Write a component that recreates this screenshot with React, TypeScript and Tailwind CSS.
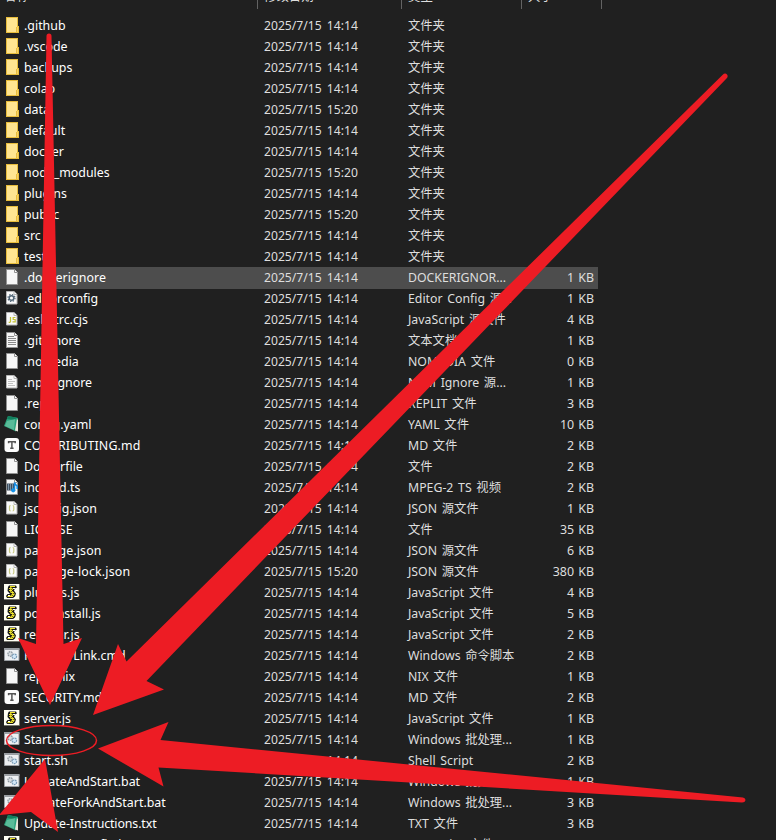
import React from "react";

type Kind =
  | "folder" | "blank" | "gear" | "cjs" | "lines" | "npm" | "green" | "typora"
  | "ts" | "json" | "js" | "script";

type Entry = [kind: Kind, name: string, type: string, size?: string, time?: string];

const DIR = "文件夹";

const entries: Entry[] = [
  ["folder", ".github", DIR],
  ["folder", ".vscode", DIR],
  ["folder", "backups", DIR],
  ["folder", "colab", DIR],
  ["folder", "data", DIR, "", "15:20"],
  ["folder", "default", DIR],
  ["folder", "docker", DIR],
  ["folder", "node_modules", DIR, "", "15:20"],
  ["folder", "plugins", DIR],
  ["folder", "public", DIR, "", "15:20"],
  ["folder", "src", DIR],
  ["folder", "tests", DIR],
  ["blank", ".dockerignore", "DOCKERIGNOR...", "1 KB"],
  ["gear", ".editorconfig", "Editor Config 源...", "1 KB"],
  ["cjs", ".eslintrc.cjs", "JavaScript 源文件", "4 KB"],
  ["lines", ".gitignore", "文本文档", "1 KB"],
  ["blank", ".nomedia", "NOMEDIA 文件", "0 KB"],
  ["npm", ".npmignore", "NPM Ignore 源...", "1 KB"],
  ["blank", ".replit", "REPLIT 文件", "3 KB"],
  ["green", "config.yaml", "YAML 文件", "10 KB"],
  ["typora", "CONTRIBUTING.md", "MD 文件", "2 KB"],
  ["blank", "Dockerfile", "文件", "2 KB"],
  ["ts", "index.d.ts", "MPEG-2 TS 视频", "2 KB"],
  ["json", "jsconfig.json", "JSON 源文件", "1 KB"],
  ["blank", "LICENSE", "文件", "35 KB"],
  ["json", "package.json", "JSON 源文件", "6 KB"],
  ["json", "package-lock.json", "JSON 源文件", "380 KB", "15:20"],
  ["js", "plugins.js", "JavaScript 文件", "4 KB"],
  ["js", "post-install.js", "JavaScript 文件", "5 KB"],
  ["js", "recover.js", "JavaScript 文件", "2 KB"],
  ["script", "Remote-Link.cmd", "Windows 命令脚本", "2 KB"],
  ["blank", "replit.nix", "NIX 文件", "1 KB"],
  ["typora", "SECURITY.md", "MD 文件", "2 KB"],
  ["js", "server.js", "JavaScript 文件", "1 KB"],
  ["script", "Start.bat", "Windows 批处理...", "1 KB"],
  ["script", "start.sh", "Shell Script", "2 KB"],
  ["script", "UpdateAndStart.bat", "Windows 批处理...", "1 KB"],
  ["script", "UpdateForkAndStart.bat", "Windows 批处理...", "3 KB"],
  ["green", "Update-Instructions.txt", "TXT 文件", "3 KB"],
  ["js", "webpack.config.js", "JavaScript 文件", "2 KB"],
];

const tracking: Record<string, string> = {
  ".dockerignore": "tracking-[0.08px]",
  "CONTRIBUTING.md": "tracking-[0.12px]",
  "package.json": "tracking-[0.1px]",
  "package-lock.json": "tracking-[0.16px]",
  "recover.js": "tracking-[0.2px]",
  "Start.bat": "tracking-[-0.1px]",
  "Update-Instructions.txt": "tracking-[-0.12px]",
};

function Page({ small = false, children }: { small?: boolean; children?: React.ReactNode }) {
  return small ? (
    <>
      <path d="M2.5 1.500h7.500l3 3v9.500h-10.500z" fill="#fafafa" stroke="#b5b5b5" />
      <path d="M10 1.500v3h3" fill="#fff" stroke="#b5b5b5" />
      {children}
    </>
  ) : (
    <>
      <path d="M2.5.5h8l3 3v12h-11z" fill="#f7f7f7" stroke="#929292" />
      <path d="M10.500.5v3h3" fill="#fff" stroke="#929292" />
      {children}
    </>
  );
}

function Glyph({ kind }: { kind: Kind }) {
  switch (kind) {
    case "folder":
      return (
        <>
          <path d="M2 0h12v9h1v7H2z" fill="#e8bd3c" />
          <path d="M3 1h10v14H3z" fill="#ffe591" />
          <path d="M12 10h2v5h-2z" fill="#f6d268" />
          <path d="M12.500 10v5" stroke="#e8bd3c" />
        </>
      );
    case "blank":
      return <Page />;
    case "gear":
      return (
        <Page small>
          <circle cx="7.5" cy="8" r="2.3" fill="none" stroke="#536878" strokeWidth="1.5" />
          <circle cx="7.5" cy="8" r="3.5" fill="none" stroke="#536878" strokeWidth="1.2" strokeDasharray="1.4 1.35" />
        </Page>
      );
    case "cjs":
      return (
        <Page small>
          <path d="M6.500 6v4.500q0 1.200-1.800.6M11.500 6.500H9.200v2h2v2.400H8.500" fill="none" stroke="#c3c235" strokeWidth="1.2" />
        </Page>
      );
    case "lines":
      return (
        <Page>
          <path d="M4 4.5h6M4 6.5h8M4 8.5h8M4 10.5h8M4 12.5h8" stroke="#8a8a8a" />
        </Page>
      );
    case "npm":
      return (
        <Page small>
          <path d="M4 5.5h4M4 7.5h7M4 9.5h5M4 11.5h7" stroke="#c2c2c2" />
        </Page>
      );
    case "green":
      return (
        <>
          <path d="M4 0 14 2 12 15.5 0 10z" fill="#2aa37c" />
          <path d="M4 0 13 1.700 10 4 3 3z" fill="#127f5e" />
          <path d="M3 5 11 3l-1 11-9-4z" fill="#7bcbac" opacity=".6" />
          <path d="M13 3l1 1v11.500l-3-1z" fill="#e9e4d8" />
        </>
      );
    case "typora":
      return (
        <>
          <rect x=".5" y="1" width="14.5" height="14" rx="3" fill="#fcfcfc" />
          <path d="M4.600 6.200V4.700h6.600v1.500M7.900 5v6.300M6.200 11.300h3.400" fill="none" stroke="#555" strokeWidth="1.500" />
        </>
      );
    case "ts":
      return (
        <Page>
          <path d="M3 4.500h7v7H3z" fill="#3f4d5c" />
          <path d="M4 6h5M4 8h5M4 10h5" stroke="#b8d8ee" strokeDasharray="1 1" />
          <path d="M10.500 11.500V3.500q.6 2.500 2.700 3.500v3" fill="none" stroke="#128be3" strokeWidth="1.500" />
          <circle cx="9.200" cy="11.300" r="2.100" fill="#1593e8" />
        </Page>
      );
    case "json":
      return (
        <Page small>
          <path d="M6.600 5.500q-1.100 0-1.100 1.400v2.500q0 1.400 1.100 1.400M8.700 5.500q1.100 0 1.100 1.400v2.500q0 1.400-1.100 1.400" fill="none" stroke="#c9ca87" strokeWidth="1.200" />
        </Page>
      );
    case "js":
      return (
        <>
          <path d="M0 0h15v15H0z" fill="#fffff4" />
          <path d="M0 15.500h15.500V0" fill="none" stroke="#77776c" />
          <path d="M5 1.500h7l1 2-2 1-1 2 2 3-1 3-2 1.500H3L2 12l1.500-2H6L3.500 7l.5-4z" fill="#1b1b16" />
          <path d="M6 2.500h5M5 4.500h3.500M5 6.500h3M6.500 8.500h3.500M7.500 10.500h3M3.500 12.500h5.500" stroke="#f1e72f" />
          <path d="M6 3.500h2M6 5.500h3M6 7.500h3M8 9.500h2.500M5 11.500h5" stroke="#c9bf22" strokeDasharray="1.500 .5" />
          <path d="M9 4.500h2M4 11.500h2" stroke="#fff" />
        </>
      );
    case "script":
      return (
        <>
          <path d="M.5 1.500h14.500v12H.5z" fill="#eef0f2" stroke="#9b9fa3" />
          <path d="M0 2h15.500" stroke="#9b9fa3" strokeWidth="2" />
          <circle cx="6.2" cy="7" r="2.3" fill="#d8dde1" stroke="#8d979f" strokeWidth="1.2" strokeDasharray="1.5 .6" />
          <circle cx="10.3" cy="9.300" r="2.3" fill="#d2e8f8" stroke="#7699b5" strokeWidth="1.2" strokeDasharray="1.5 .6" />
        </>
      );
  }
}

const columns = "grid grid-cols-[24px_240px_144px_113px_73px] items-center";

function Row({ entry, selected }: { entry: Entry; selected: boolean }) {
  const [kind, name, type, size, time = "14:14"] = entry;
  return (
    <div className={`${columns} h-[21px] w-[598px] shrink-0 whitespace-pre ${selected ? "bg-[#4d4d4d] shadow-[0_1px_0_#4d4d4d]" : ""}`}>
      <svg className="mb-px ml-1 size-4" viewBox="0 0 16 16">
        <Glyph kind={kind} />
      </svg>
      <span className={`text-white ${tracking[name] ?? ""}`}>{name}</span>
      <span className="text-[12.15px] [word-spacing:2px]">{`2025/7/15 ${time}`}</span>
      <span className="text-[12.3px] [word-spacing:1.5px]">{type}</span>
      <span className="text-right [word-spacing:1px]">{size}</span>
    </div>
  );
}

function Heading({ label, className }: { label: string; className: string }) {
  return (
    <div className={`flex h-[9px] items-end border-r border-[#636363] ${className}`}>
      <span className="mb-[4px] leading-4">{label}</span>
    </div>
  );
}

export default function App() {
  return (
    <main className="relative flex h-[840px] w-[776px] flex-col overflow-hidden bg-[#202020] font-['Noto_Sans','Noto_Sans_CJK_SC',sans-serif] text-[12.4px] leading-[21px] text-[#dedede]">
      <header className="flex h-[15px] shrink-0">
        <Heading label="名称" className="w-[258px] pl-1" />
        <Heading label="修改日期" className="w-[144px] pl-[6px]" />
        <Heading label="类型" className="w-[120px] pl-[6px]" />
        <Heading label="大小" className="w-[80px] pl-[6px]" />
      </header>
      {entries.map((entry, i) => (
        <Row key={entry[1]} entry={entry} selected={i === 12} />
      ))}
      <svg className="absolute inset-0" width="776" height="840" viewBox="0 0 776 840">
        <g fill="#ed1c24">
          <path d="M46.500 36Q46.500 33.500 49 33.500Q51.500 33.500 51.500 36L63.500 644 82 638 50 705 18 638 36 644Z" />
          <path d="M722.500 75Q725 72.500 727 74.500Q728.500 76.500 726.500 78.500L146.500 681 164 689.500 93 715 118 644 126.500 661.500Z" />
          <path d="M743 797.500Q745.500 798 745.500 800Q745 802.500 742 802.500L158.500 767.500 163.500 786.500 98 748.500 168.500 722 160.500 740Z" />
          <path d="M45 759 58 832 31 812 0 815V814Z" />
        </g>
        <ellipse cx="51.500" cy="740.500" rx="45" ry="15" fill="none" stroke="#ed1c24" strokeWidth="1.500" />
      </svg>
    </main>
  );
}
